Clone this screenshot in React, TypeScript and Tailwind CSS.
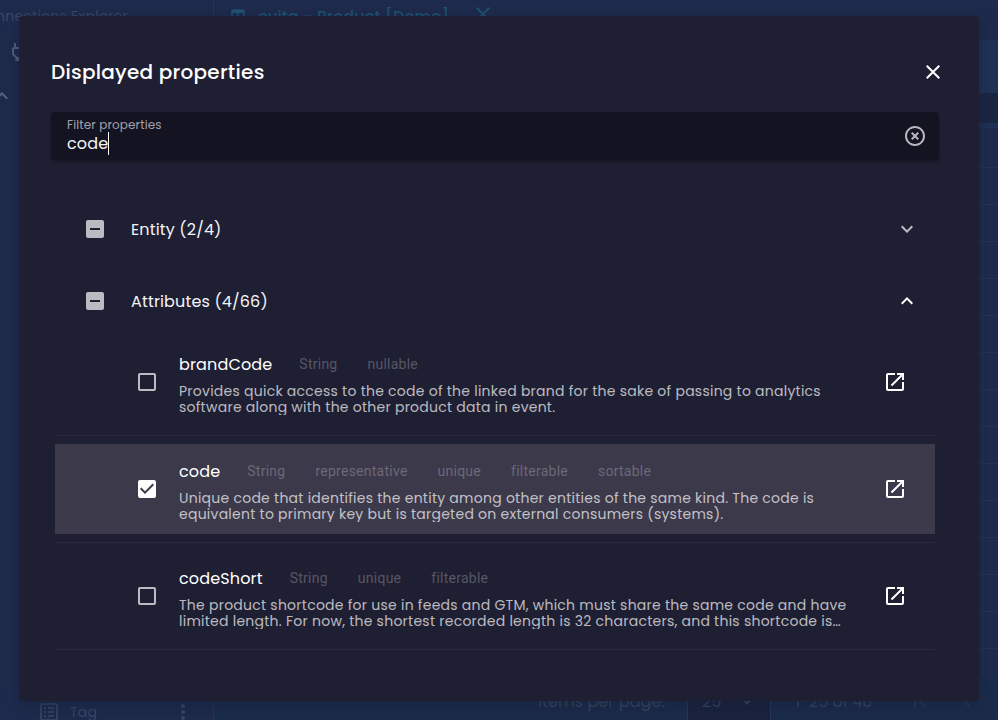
import React from 'react';

const ICONS = {
  close:
    'M19,6.41L17.59,5L12,10.59L6.41,5L5,6.41L10.59,12L5,17.59L6.41,19L12,13.41L17.59,19L19,17.59L13.41,12L19,6.41Z',
  clear:
    'M12,20C7.59,20 4,16.41 4,12C4,7.59 7.59,4 12,4C16.41,4 20,7.59 20,12C20,16.41 16.41,20 12,20M12,2C6.47,2 2,6.47 2,12C2,17.53 6.47,22 12,22C17.53,22 22,17.53 22,12C22,6.47 17.53,2 12,2M14.59,8L12,10.59L9.41,8L8,9.41L10.59,12L8,14.59L9.41,16L12,13.41L14.59,16L16,14.59L13.41,12L16,9.41L14.59,8Z',
  chevronDown: 'M7.41,8.58L12,13.17L16.59,8.58L18,10L12,16L6,10L7.41,8.58Z',
  chevronUp: 'M7.41,15.41L12,10.83L16.59,15.41L18,14L12,8L6,14L7.41,15.41Z',
  chevronLeft: 'M15.41,16.58L10.83,12L15.41,7.41L14,6L8,12L14,18L15.41,16.58Z',
  pageFirst: 'M18.41,16.59L13.82,12L18.41,7.41L17,6L11,12L17,18L18.41,16.59M6,6H8V18H6V6Z',
  menuDown: 'M7,10L12,15L17,10H7Z',
  boxBlank:
    'M19,3H5C3.89,3 3,3.89 3,5V19A2,2 0 0,0 5,21H19A2,2 0 0,0 21,19V5C21,3.89 20.1,3 19,3M19,5V19H5V5H19Z',
  boxMarked:
    'M10,17L5,12L6.41,10.58L10,14.17L17.59,6.58L19,8M19,3H5C3.89,3 3,3.89 3,5V19A2,2 0 0,0 5,21H19A2,2 0 0,0 21,19V5C21,3.89 20.1,3 19,3Z',
  boxMinus:
    'M17,13H7V11H17M19,3H5C3.89,3 3,3.89 3,5V19A2,2 0 0,0 5,21H19A2,2 0 0,0 21,19V5C21,3.89 20.1,3 19,3Z',
  open:
    'M14,3V5H17.59L7.76,14.83L9.17,16.24L19,6.41V10H21V3M19,19H5V5H12V3H5C3.89,3 3,3.9 3,5V19A2,2 0 0,0 5,21H19A2,2 0 0,0 21,19V12H19V19Z',
  plug: 'M16,7V3H14V7H10V3H8V7H8C7,7 6,8 6,9V14.5L9.5,18V21H14.5V18L18,14.5V9C18,8 17,7 16,7M16,13.67L13.09,16.59L12.67,17H11.33L10.92,16.59L8,13.67V9.09C8,9.06 8.06,9 8.09,9H15.92C15.95,9 16,9.06 16,9.09V13.67Z',
  list: 'M11,15H17V17H11V15M9,7H7V9H9V7M11,13H17V11H11V13M11,9H17V7H11V9M9,11H7V13H9V11M21,5V19C21,20.1 20.1,21 19,21H5C3.89,21 3,20.1 3,19V5C3,3.9 3.9,3 5,3H19C20.1,3 21,3.9 21,5M19,5H5V19H19V5M9,15H7V17H9V15Z',
  dots: 'M12,16A2,2 0 0,1 14,18A2,2 0 0,1 12,20A2,2 0 0,1 10,18A2,2 0 0,1 12,16M12,10A2,2 0 0,1 14,12A2,2 0 0,1 12,14A2,2 0 0,1 10,12A2,2 0 0,1 12,10M12,4A2,2 0 0,1 14,6A2,2 0 0,1 12,8A2,2 0 0,1 10,6A2,2 0 0,1 12,4Z',
  table:
    'M5,3H19A2,2 0 0,1 21,5V19A2,2 0 0,1 19,21H5A2,2 0 0,1 3,19V5A2,2 0 0,1 5,3M5,8V19H11V8H5M13,8V19H19V8H13Z',
};

function Icon({ name, className = 'size-6' }: { name: keyof typeof ICONS; className?: string }) {
  return (
    <svg viewBox="0 0 24 24" className={`shrink-0 fill-current ${className}`}>
      <path d={ICONS[name]} />
    </svg>
  );
}

function Background() {
  return (
    <div className="flex h-full w-full bg-[#1f2b4d] text-[#3c4866]">
      <aside className="flex w-[214px] shrink-0 flex-col border-r border-[#293554]">
        <div className="-ml-1 h-8 whitespace-nowrap text-[14px] leading-8 tracking-[0.25px]">nnections Explorer</div>
        <div className="flex h-10 items-center pl-[6px]">
          <Icon name="plug" className="size-6 text-[#596480]" />
        </div>
        <div className="-ml-[10px] mt-3 flex h-6 items-center">
          <Icon name="chevronUp" className="size-6 text-[#596480]" />
        </div>
        <div className="mt-auto flex h-5 items-start pl-[37px]">
          <Icon name="list" className="size-6 text-[#35435f]" />
          <span className="ml-[9px] text-[14px] leading-6 tracking-[0.25px]">Tag</span>
          <Icon name="dots" className="ml-auto mr-[18px] size-6" />
        </div>
      </aside>
      <main className="flex min-w-0 flex-1 flex-col">
        <div className="flex h-10 shrink-0 items-start pl-[15px] text-[#1e5577]">
          <Icon name="table" className="mt-[7px] size-[18px]" />
          <span className="ml-[11px] whitespace-nowrap text-[16px] font-medium leading-[34px] tracking-[0.15px]">
            evita - Product [Demo]
          </span>
          <Icon name="close" className="ml-[22px] mt-[2px] size-6" />
        </div>
        <div className="h-[53px] shrink-0 bg-[#203356]" />
        <div className="h-[30px] shrink-0 bg-[#1b2643]" />
        <div className="h-[5px] shrink-0 bg-[#203257]" />
        <div className="flex h-[549px] shrink-0 flex-col overflow-hidden">
          {Array.from({ length: 15 }, (_, i) => (
            <div
              key={i}
              className="flex h-[37px] shrink-0 justify-end border-b border-[#24345a] first:h-10 last:border-b-0"
            >
              <div className="h-full w-4 border-l border-[#223458]" />
            </div>
          ))}
        </div>
        <div className="flex flex-1 items-start bg-[#1b2c4b] pl-[324px] text-[#3b4963]">
          <span className="w-[149px] whitespace-nowrap text-[16px] leading-[50px] tracking-[0.1px]">
            items per page:
          </span>
          <div className="flex h-full w-[84px] items-center border-x border-[#2a3856] bg-[#1a223f] pl-[14px]">
            <span className="text-[16px] leading-5">25</span>
            <Icon name="menuDown" className="ml-[14px] size-6" />
          </div>
          <span className="ml-6 whitespace-nowrap text-[16px] leading-[50px]">1-25 of 40</span>
          <Icon name="pageFirst" className="ml-[36px] mt-[13px] size-6 text-[#2a3856]" />
          <Icon name="chevronLeft" className="ml-6 mt-[13px] size-6 text-[#2a3856]" />
        </div>
      </main>
    </div>
  );
}

function Group({ title, open }: { title: string; open?: boolean }) {
  return (
    <div className="flex h-[72px] items-center pl-7 pr-4">
      <Icon name="boxMinus" className="size-6 text-[#bbbbc1]" />
      <span className="ml-6 pt-0.5 text-[16px] tracking-[0.15px] text-[#f4f4f6]">{title}</span>
      <Icon
        name={open ? 'chevronUp' : 'chevronDown'}
        className={`ml-auto size-6 ${open ? 'text-white' : 'text-[#bcbcc0]'}`}
      />
    </div>
  );
}

type PropertyProps = { name: string; tags: string[]; description: string; checked?: boolean };

function Property({ name, tags, description, checked }: PropertyProps) {
  return (
    <div className="border-b border-[#2a2a3e] pb-2 not-first:pt-2">
      <div className={`flex h-[90px] items-center pl-20 pr-7 ${checked ? 'bg-[#3c394b]' : ''}`}>
        <Icon
          name={checked ? 'boxMarked' : 'boxBlank'}
          className={`size-6 ${checked ? 'text-white' : 'text-[#bbbbc1]'}`}
        />
        <div className="ml-5 mr-4 flex min-w-0 flex-1 flex-col">
          <div className="flex h-[30px] items-center">
            <span className="mr-[27px] shrink-0 text-[16px] leading-7 tracking-[0.15px] text-white">{name}</span>
            <div className="flex gap-[30px] font-[Roboto] text-[14px] tracking-[0.25px] text-white/25">
              {tags.map((tag) => (
                <span key={tag}>{tag}</span>
              ))}
            </div>
          </div>
          <p className="mt-[3px] line-clamp-2 h-8 text-[14px] leading-4 tracking-[0.25px] text-white/70">
            {description}
          </p>
        </div>
        <Icon name="open" className="size-6 text-white" />
      </div>
    </div>
  );
}

const PROPERTIES: PropertyProps[] = [
  {
    name: 'brandCode',
    tags: ['String', 'nullable'],
    description:
      'Provides quick access to the code of the linked brand for the sake of passing to analytics software along with the other product data in event.',
  },
  {
    name: 'code',
    tags: ['String', 'representative', 'unique', 'filterable', 'sortable'],
    checked: true,
    description:
      'Unique code that identifies the entity among other entities of the same kind. The code is equivalent to primary key but is targeted on external consumers (systems).',
  },
  {
    name: 'codeShort',
    tags: ['String', 'unique', 'filterable'],
    description:
      'The product shortcode for use in feeds and GTM, which must share the same code and have limited length. For now, the shortest recorded length is 32 characters, and this shortcode is…',
  },
];

export default function App() {
  return (
    <div className="relative h-[720px] w-[998px] overflow-hidden font-[Poppins,Inter,sans-serif]">
      <Background />
      <section
        role="dialog"
        className="absolute left-[19px] top-4 flex h-[685px] w-[960px] flex-col rounded bg-[#1f1f33] pl-8 pr-10 shadow-[0_4px_18px_rgba(20,30,55,0.6)]"
      >
        <header className="mt-11 flex h-6 items-center justify-between">
          <h1 className="text-[20px] font-medium tracking-[0.25px] text-white">Displayed properties</h1>
          <Icon name="close" className="-mr-1.5 size-6 text-white" />
        </header>
        <div className="mt-7 flex h-12 shrink-0 items-center justify-between rounded bg-[#141321] pl-4 pr-3 shadow-[0_2px_3px_rgba(0,0,0,0.3)]">
          <div className="flex flex-col">
            <label className="text-[12px] leading-4 tracking-[0.1125px] text-[#a1a1aa]">Filter properties</label>
            <div className="flex h-[23px] items-center text-[16px] text-[#f4f4f6]">
              <span className="tracking-[0.15px]">code</span>
              <span className="-mt-0.5 h-[23px] w-px bg-white" />
            </div>
          </div>
          <Icon name="clear" className="size-6 text-[#b8b8bc]" />
        </div>
        <div className="ml-1 mt-[33px] flex w-[880px] flex-col">
          <Group title="Entity (2/4)" />
          <Group title="Attributes (4/66)" open />
          <div>
            {PROPERTIES.map((property) => (
              <Property key={property.name} {...property} />
            ))}
          </div>
        </div>
      </section>
    </div>
  );
}
